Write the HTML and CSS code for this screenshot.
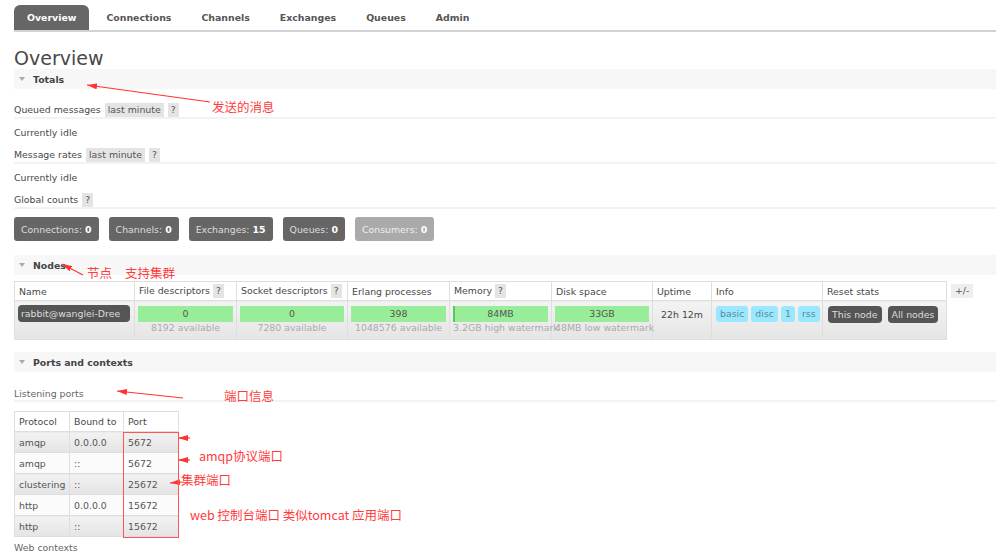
FILE: index.html
```html
<!DOCTYPE html>
<html>
<head>
<meta charset="utf-8">
<link rel="stylesheet" href="styles.css">
</head>
<body>
<div class="page">
  <nav class="tabs">
    <a class="tab active">Overview</a>
    <a class="tab">Connections</a>
    <a class="tab">Channels</a>
    <a class="tab">Exchanges</a>
    <a class="tab">Queues</a>
    <a class="tab">Admin</a>
  </nav>
  <h1>Overview</h1>

  <div class="section-head"><span class="tri"></span>Totals</div>
  <div class="row line r1"><span>Queued messages</span><span class="pill">last minute</span><span class="pill">?</span></div>
  <div class="idle i1">Currently idle</div>
  <div class="row line r2"><span>Message rates</span><span class="pill">last minute</span><span class="pill">?</span></div>
  <div class="idle i2">Currently idle</div>
  <div class="row line r3"><span>Global counts</span><span class="pill">?</span></div>
  <div class="counts">
    <span class="count">Connections: <b>0</b></span>
    <span class="count">Channels: <b>0</b></span>
    <span class="count">Exchanges: <b>15</b></span>
    <span class="count">Queues: <b>0</b></span>
    <span class="count light">Consumers: <b>0</b></span>
  </div>

  <div class="section-head nodes-head"><span class="tri"></span>Nodes</div>
  <div class="nodes-wrap">
    <table class="nodes">
      <colgroup>
        <col class="c-name"><col class="c-fd"><col class="c-sd"><col class="c-ep"><col class="c-mem"><col class="c-disk"><col class="c-up"><col class="c-info"><col class="c-reset">
      </colgroup>
      <thead>
        <tr>
          <th>Name</th>
          <th>File descriptors <span class="pill">?</span></th>
          <th>Socket descriptors <span class="pill">?</span></th>
          <th>Erlang processes</th>
          <th>Memory <span class="pill">?</span></th>
          <th>Disk space</th>
          <th>Uptime</th>
          <th>Info</th>
          <th>Reset stats</th>
        </tr>
      </thead>
      <tbody>
        <tr>
          <td><div class="node-name">rabbit@wanglei-Dree</div></td>
          <td><div class="bar">0</div><div class="sub">8192 available</div></td>
          <td><div class="bar">0</div><div class="sub">7280 available</div></td>
          <td><div class="bar">398</div><div class="sub">1048576 available</div></td>
          <td><div class="bar mem"><span class="mem-fill"></span>84MB</div><div class="sub">3.2GB high watermark</div></td>
          <td><div class="bar">33GB</div><div class="sub">48MB low watermark</div></td>
          <td class="uptime">22h 12m</td>
          <td><div class="badges"><span class="info">basic</span><span class="info">disc</span><span class="info">1</span><span class="info">rss</span></div></td>
          <td><div class="badges"><span class="btn">This node</span><span class="btn">All nodes</span></div></td>
        </tr>
      </tbody>
    </table>
    <span class="plusminus">+/-</span>
  </div>

  <div class="section-head ports-head"><span class="tri"></span>Ports and contexts</div>
  <div class="row line listen"><span>Listening ports</span></div>
  <table class="ports">
    <colgroup><col class="p1"><col class="p2"><col class="p3"></colgroup>
    <thead><tr><th>Protocol</th><th>Bound to</th><th>Port</th></tr></thead>
    <tbody>
      <tr class="alt"><td>amqp</td><td>0.0.0.0</td><td>5672</td></tr>
      <tr><td>amqp</td><td>::</td><td>5672</td></tr>
      <tr class="alt"><td>clustering</td><td>::</td><td>25672</td></tr>
      <tr><td>http</td><td>0.0.0.0</td><td>15672</td></tr>
      <tr class="alt"><td>http</td><td>::</td><td>15672</td></tr>
    </tbody>
  </table>
  <div class="web">Web contexts</div>
</div>

<div class="annot">
  <svg class="annot-svg" width="996" height="551" viewBox="0 0 996 551">
    <defs>
      <marker id="ah" viewBox="0 0 10 6" refX="10" refY="3" markerWidth="10" markerHeight="6" markerUnits="userSpaceOnUse" orient="auto-start-reverse">
        <path d="M0 0 L10 3 L0 6 Z" fill="#f33"/>
      </marker>
    </defs>
    <g stroke="#f33" stroke-width="1.2" fill="none">
      <path d="M87 85 L210 102" marker-start="url(#ah)"/>
      <path d="M62 264 L83 275" marker-start="url(#ah)"/>
      <path d="M117 391 L183 398" marker-start="url(#ah)"/>
      <path d="M178 438 L190 438" marker-start="url(#ah)"/>
      <path d="M178 460 L190 460" marker-start="url(#ah)"/>
      <path d="M170 483 L182 482" marker-start="url(#ah)"/>
      <rect x="123.5" y="432.5" width="55" height="105" stroke="#f55" stroke-width="1"/>
    </g>
  </svg>
  <span class="note n1">发送的消息</span>
  <span class="note n2">节点</span>
  <span class="note n3">支持集群</span>
  <span class="note n4">端口信息</span>
  <span class="note n5">amqp协议端口</span>
  <span class="note n6">集群端口</span>
  <span class="note n7">web 控制台端口 类似tomcat 应用端口</span>
</div>
</body>
</html>
```

FILE: styles.css
```css
html, body {
  margin: 0;
  padding: 0;
  width: 996px;
  height: 551px;
  overflow: hidden;
  background: #fff;
}
body {
  font-family: "DejaVu Sans", Verdana, sans-serif;
  font-size: 9.4px;
  color: #484848;
  position: relative;
}
.page {
  padding-left: 14px;
}

/* nav tabs */
.tabs {
  margin-top: 5px;
  height: 25px;
  display: flex;
  border-bottom: 2px solid #d2d2d2;
}
.tab {
  display: flex;
  align-items: center;
  padding: 0 13px;
  margin-right: 4px;
  font-weight: bold;
  color: #555;
  border-radius: 6px 6px 0 0;
}
.tab.active {
  background: #666;
  color: #fff;
}

h1 {
  margin: 15px 0 0;
  font-size: 19px;
  line-height: 22px;
  font-weight: normal;
  color: #484848;
}

/* section headers */
.section-head {
  height: 20px;
  background: #f7f7f7;
  display: flex;
  align-items: center;
  padding-left: 5px;
  font-weight: bold;
  color: #444;
}
.tri {
  width: 0;
  height: 0;
  border-left: 3.5px solid transparent;
  border-right: 3.5px solid transparent;
  border-top: 4px solid #aaa;
  margin-right: 8px;
}

.row {
  height: 15px;
  display: flex;
  align-items: center;
  gap: 4px;
}
.row.line {
  border-bottom: 2px solid #f3f3f3;
}
.pill {
  display: inline-block;
  background: #e4e4e4;
  height: 14px;
  line-height: 14px;
  padding: 0 3px;
  color: #555;
}
.r1 { margin-top: 13px; }
.r2 { margin-top: 6px; }
.r3 { margin-top: 6px; }
.idle {
  line-height: 16px;
  margin-top: 6px;
}

.counts {
  margin-top: 8px;
  display: flex;
  gap: 10px;
}
.count {
  height: 24px;
  display: flex;
  align-items: center;
  padding: 0 7px;
  background: #666;
  color: #ddd;
  border-radius: 3px;
  white-space: pre;
}
.count b { color: #fff; }
.count.light {
  background: #aaa;
  color: #eee;
}

/* nodes */
.nodes-head { margin-top: 14px; }
.nodes-wrap {
  margin-top: 6px;
  display: flex;
  align-items: flex-start;
}
table {
  border-collapse: collapse;
  table-layout: fixed;
}
.nodes { width: 932px; }
.c-name { width: 120px; }
.c-fd { width: 102px; }
.c-sd { width: 111px; }
.c-ep { width: 102px; }
.c-mem { width: 102px; }
.c-disk { width: 101px; }
.c-up { width: 59px; }
.c-info { width: 111px; }
.c-reset { width: 124px; }
th, td {
  border: 1px solid #dedede;
}
.nodes th {
  height: 18px;
  padding: 0 4px;
  text-align: left;
  font-weight: normal;
  white-space: nowrap;
  background: #fff;
}
.nodes td {
  height: 29px;
  padding: 4px 3px 3px;
  vertical-align: top;
  background: linear-gradient(#f3f3f3, #e5e5e5);
}
.node-name {
  width: 106px;
  height: 17px;
  line-height: 17px;
  padding: 0 3px;
  background: #555;
  color: #ddd;
  border-radius: 4px;
  overflow: hidden;
  white-space: nowrap;
}
.bar {
  margin-top: 1px;
  height: 16px;
  line-height: 16px;
  background: #98ee98;
  text-align: center;
  color: #555;
  position: relative;
}
.mem-fill {
  position: absolute;
  left: 0;
  top: 0;
  width: 2px;
  height: 16px;
  background: #5cc85c;
}
.sub {
  line-height: 12px;
  text-align: center;
  white-space: nowrap;
  color: #aaa;
}
.nodes td.uptime {
  padding-top: 6px;
  line-height: 16px;
  text-align: center;
}
.badges {
  margin-top: 1px;
  display: flex;
  gap: 3px;
  padding-left: 1px;
}
.info {
  height: 16px;
  line-height: 16px;
  padding: 0 4px;
  background: #99e8ff;
  color: #5b8a9a;
  border-radius: 3px;
}
.btn {
  height: 17px;
  line-height: 17px;
  padding: 0 4px;
  background: #555;
  color: #ddd;
  border-radius: 4px;
  margin-right: 3px;
}
.badges .btn:first-child { margin-left: 1px; }
.plusminus {
  margin-left: 4px;
  margin-top: 3px;
  height: 14px;
  line-height: 14px;
  padding: 0 4px;
  background: #eee;
  color: #555;
}

/* ports */
.ports-head { margin-top: 12px; }
.listen {
  margin-top: 14px;
  height: 14px;
  color: #666;
}
.ports {
  margin-top: 9px;
  width: 164px;
}
.p1 { width: 55px; }
.p2 { width: 54px; }
.p3 { width: 55px; }
.ports th {
  height: 19px;
  padding: 0 4px;
  text-align: left;
  font-weight: normal;
  background: #fff;
}
.ports td {
  height: 20px;
  padding: 0 4px;
  white-space: nowrap;
  color: #555;
  background: #fbfbfb;
}
.ports tr.alt td {
  background: linear-gradient(#f2f2f2, #e4e4e4);
}
.web {
  margin-top: 5px;
  line-height: 11px;
  color: #666;
}

/* annotations overlay */
.annot {
  position: absolute;
  left: 0;
  top: 0;
  width: 996px;
  height: 551px;
  pointer-events: none;
}
.annot-svg {
  position: absolute;
  left: 0;
  top: 0;
}
.note {
  position: absolute;
  font-family: "Noto Sans CJK SC", "DejaVu Sans", sans-serif;
  font-size: 12.5px;
  line-height: 16px;
  color: #ff3b3b;
  white-space: nowrap;
}
.n1 { left: 212px; top: 99px; }
.n2 { left: 87px; top: 265px; }
.n3 { left: 125px; top: 265px; }
.n4 { left: 224px; top: 388px; }
.n5 { left: 199px; top: 448px; }
.n6 { left: 181px; top: 472px; }
.n7 { left: 190px; top: 507px; }
```
